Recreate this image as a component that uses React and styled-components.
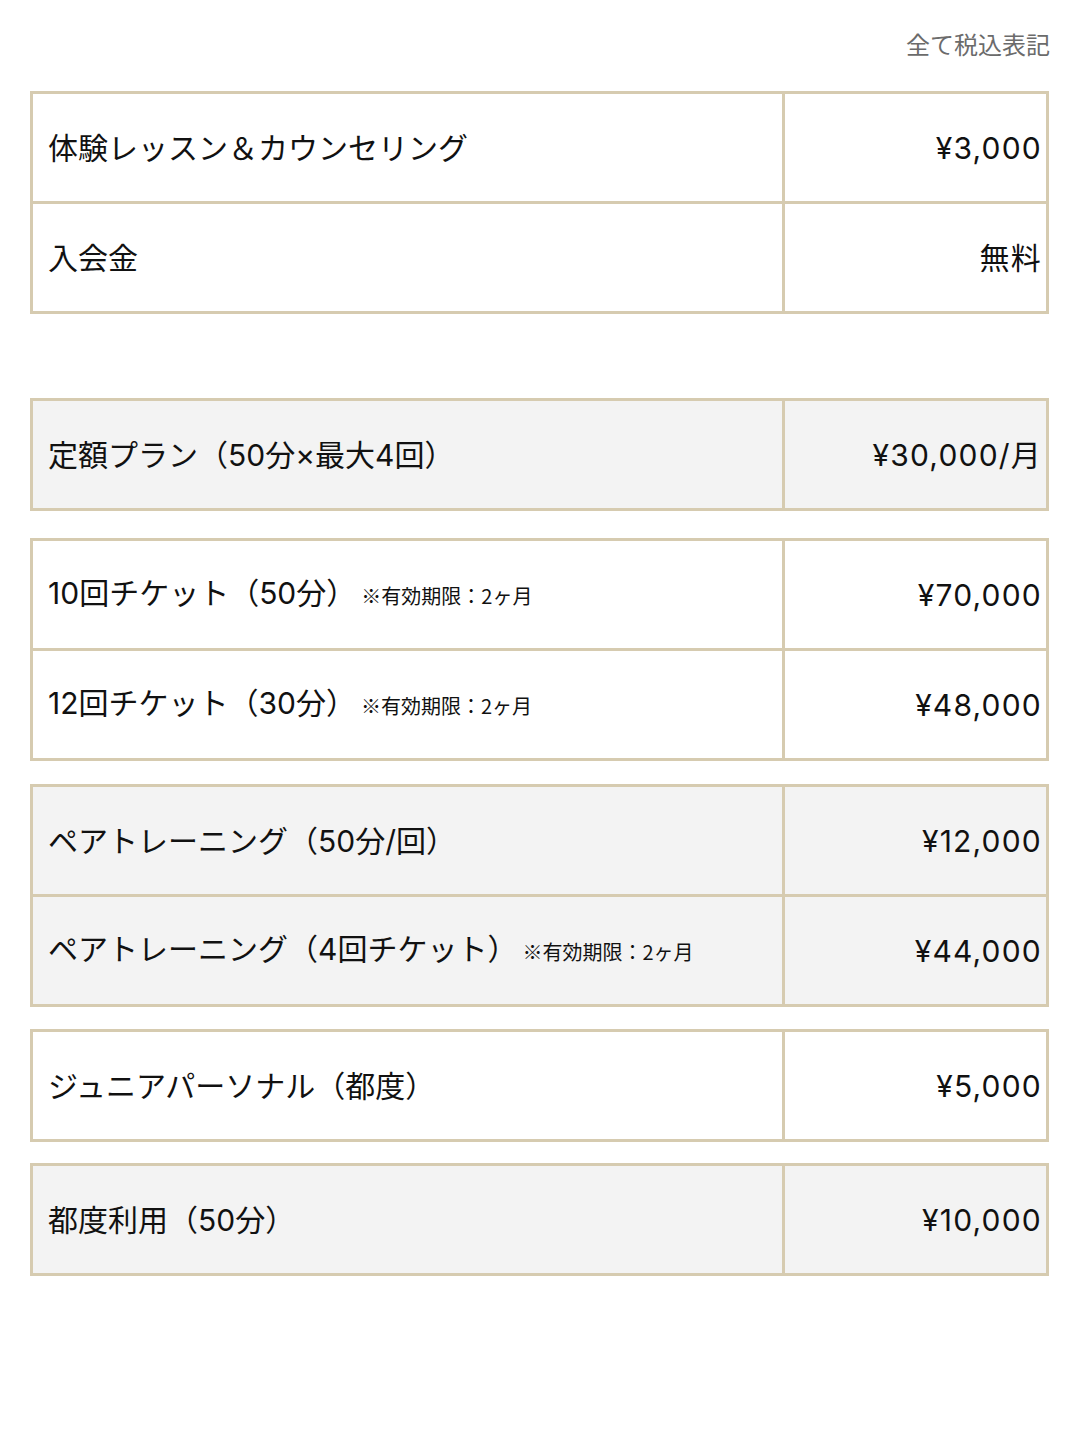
import React from "react";
import styled, { createGlobalStyle } from "styled-components";

const GlobalStyle = createGlobalStyle`
  html, body {
    margin: 0;
    padding: 0;
    background: #ffffff;
  }
  body {
    font-family: "Inter", "Noto Sans CJK JP", "Noto Sans", sans-serif;
    color: #111111;
  }
`;

const groups = [
  {
    gap: 0,
    shaded: false,
    rows: [
      { name: "体験レッスン＆カウンセリング", price: "¥3,000" },
      { name: "入会金", price: "無料" },
    ],
  },
  {
    gap: 84,
    shaded: true,
    rows: [{ name: "定額プラン（50分×最大4回）", price: "¥30,000/月" }],
  },
  {
    gap: 27,
    shaded: false,
    rows: [
      { name: "10回チケット（50分）", note: "※有効期限：2ヶ月", price: "¥70,000" },
      { name: "12回チケット（30分）", note: "※有効期限：2ヶ月", price: "¥48,000" },
    ],
  },
  {
    gap: 23,
    shaded: true,
    rows: [
      { name: "ペアトレーニング（50分/回）", price: "¥12,000" },
      { name: "ペアトレーニング（4回チケット）", note: "※有効期限：2ヶ月", price: "¥44,000" },
    ],
  },
  {
    gap: 22,
    shaded: false,
    rows: [{ name: "ジュニアパーソナル（都度）", price: "¥5,000" }],
  },
  {
    gap: 21,
    shaded: true,
    rows: [{ name: "都度利用（50分）", price: "¥10,000" }],
  },
];

const App = () => {
  return (
    <Wrapper>
      <GlobalStyle />
      <TaxNote>全て税込表記</TaxNote>
      {groups.map((group, index) => (
        <PriceTable key={index} $gap={group.gap} $shaded={group.shaded}>
          <colgroup>
            <col />
            <PriceCol />
          </colgroup>
          <tbody>
            {group.rows.map((row) => (
              <tr key={row.name}>
                <NameCell>
                  {row.name}
                  {row.note && <Note>{row.note}</Note>}
                </NameCell>
                <PriceCell>{row.price}</PriceCell>
              </tr>
            ))}
          </tbody>
        </PriceTable>
      ))}
    </Wrapper>
  );
};

const Wrapper = styled.div`
  width: 1080px;
  min-height: 1440px;
  box-sizing: border-box;
  padding: 27px 30px 0 30px;
`;

const TaxNote = styled.p`
  margin: 0 0 30px 0;
  text-align: right;
  font-family: "Noto Sans CJK JP", sans-serif;
  font-size: 24px;
  line-height: 34px;
  color: #6b6b6b;
`;

const PriceTable = styled.table`
  width: 1019px;
  margin-top: ${(props) => props.$gap}px;
  border-collapse: collapse;
  table-layout: fixed;
  background: ${(props) => (props.$shaded ? "#f3f3f3" : "#ffffff")};
  border: 3px solid #d6cbb0;
`;

const PriceCol = styled.col`
  width: 264px;
`;

const cellBase = `
  height: 110px;
  box-sizing: border-box;
  border: 3px solid #d6cbb0;
  vertical-align: middle;
  font-size: 30px;
  line-height: 40px;
  color: #111111;
  white-space: nowrap;
`;

const NameCell = styled.td`
  ${cellBase}
  padding: 0 0 0 15px;
  text-align: left;
`;

const PriceCell = styled.td`
  ${cellBase}
  padding: 0 4px 0 0;
  text-align: right;
  letter-spacing: 1.2px;
`;

const Note = styled.span`
  margin-left: 5px;
  font-family: "Noto Sans CJK JP", sans-serif;
  font-size: 20px;
  color: #111111;
`;

export default App;
